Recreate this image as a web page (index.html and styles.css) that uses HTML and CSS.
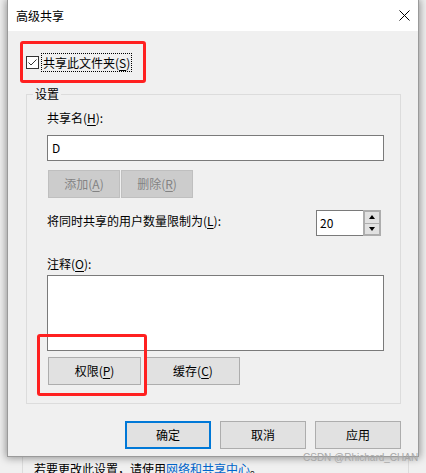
FILE: index.html
```html
<!DOCTYPE html>
<html lang="zh-CN">
<head>
<meta charset="utf-8">
<title>高级共享</title>
<link rel="stylesheet" href="styles.css">
</head>
<body>
<div class="desktop">
  <div class="dialog">
    <div class="titlebar">
      <span class="title">高级共享</span>
      <svg class="close" width="11" height="11" viewBox="0 0 11 11"><path d="M0.5 0.5 L10.5 10.5 M10.5 0.5 L0.5 10.5" stroke="#000" stroke-width="1" fill="none"/></svg>
    </div>
    <div class="body">
      <div class="share-row">
        <svg class="checkbox" width="13" height="13" viewBox="0 0 13 13"><rect x="0.5" y="0.5" width="12" height="12" fill="#fff" stroke="#333"/><path d="M2.5 6.5 L5 9 L10.5 3.5" stroke="#333" stroke-width="1" fill="none"/></svg>
        <span class="focus-label">共享此文件夹(<u>S</u>)</span>
      </div>
      <fieldset class="group">
        <legend>设置</legend>
        <div class="field-label">共享名(<u>H</u>):</div>
        <div class="text-input">D</div>
        <div class="btn-row">
          <div class="btn disabled">添加(<u>A</u>)</div>
          <div class="btn disabled">删除(<u>R</u>)</div>
        </div>
        <div class="limit-row">
          <div class="limit-label">将同时共享的用户数量限制为(<u>L</u>):</div>
          <div class="spin">
            <div class="spin-input">20</div>
            <div class="spin-btns">
              <div class="spin-btn"><span class="arrow-up"></span></div>
              <div class="spin-btn"><span class="arrow-down"></span></div>
            </div>
          </div>
        </div>
        <div class="comment-label">注释(<u>O</u>):</div>
        <div class="textarea"></div>
        <div class="btn-row2">
          <div class="btn perm">权限(<u>P</u>)</div>
          <div class="btn cache">缓存(<u>C</u>)</div>
        </div>
      </fieldset>
      <div class="footer">
        <div class="btn action default">确定</div>
        <div class="btn action">取消</div>
        <div class="btn action">应用</div>
      </div>
    </div>
  </div>
  <div class="parent-area">若要更改此设置，请使用<span class="link">网络和共享中心</span>。</div>
  <div class="mark mark1"></div>
  <div class="mark mark2"></div>
  <div class="watermark">CSDN @Rhichard_CHAN</div>
</div>
</body>
</html>
```
FILE: styles.css
```css
* { box-sizing: border-box; }
body {
  margin: 0;
  font: 12px/16px "Noto Sans CJK SC", "Noto Sans", sans-serif;
  color: #000;
}
u { text-decoration-thickness: 1px; text-underline-offset: 2px; }
.desktop {
  position: relative;
  width: 426px;
  height: 473px;
  overflow: hidden;
  background: #f0f0f0;
}
.dialog {
  position: relative;
  z-index: 1;
  margin-left: 7px;
  width: 412px;
  border: 1px solid #9a9a9a;
  border-top: none;
  background: #f0f0f0;
  box-shadow: 0 0 8px 1px rgba(0, 0, 0, 0.4);
}
.titlebar {
  height: 31px;
  background: #fff;
  display: flex;
  align-items: center;
  justify-content: space-between;
  padding: 0 8px 0 8px;
}
.close { display: block; }
.body { padding: 21px 17px 7px 18px; }
.share-row {
  display: flex;
  align-items: center;
  height: 20px;
}
.checkbox { display: block; }
.focus-label {
  margin-left: 2px;
  border: 1px dotted #000;
  padding: 0 1px;
  line-height: 17px;
}
.group {
  margin: 14px 0 0;
  width: 375px;
  border: 1px solid #dcdcdc;
  padding: 8px 16px 18px 20px;
  min-width: 0;
}
.group legend {
  padding: 0 2px;
  margin-left: -14px;
  line-height: 16px;
}
.field-label { height: 16px; }
.text-input {
  margin-top: 9px;
  height: 26px;
  border: 1px solid #7a7a7a;
  background: #fff;
  padding-left: 4px;
  display: flex;
  align-items: center;
}
.btn-row {
  margin-top: 9px;
  display: flex;
  gap: 1px;
  padding-left: 1px;
}
.btn {
  height: 28px;
  display: flex;
  align-items: center;
  justify-content: center;
  border: 1px solid #adadad;
  background: #e1e1e1;
}
.btn.disabled {
  width: 72px;
  background: #cccccc;
  border-color: #bfbfbf;
  color: #838383;
}
.limit-row {
  margin-top: 12px;
  display: flex;
  justify-content: space-between;
  align-items: flex-start;
}
.limit-label { margin-top: 3px; }
.spin {
  display: flex;
  width: 65px;
  height: 26px;
  margin-right: 3px;
}
.spin-input {
  flex: 1;
  border: 1px solid #7a7a7a;
  border-right: none;
  background: #fff;
  padding-left: 3px;
  display: flex;
  align-items: center;
}
.spin-btns {
  width: 18px;
  display: flex;
  flex-direction: column;
  border: 1px solid #adadad;
  background: #f0f0f0;
}
.spin-btn {
  flex: 1;
  display: flex;
  align-items: center;
  justify-content: center;
  background: #e1e1e1;
  border: 1px solid #adadad;
}
.spin-btn + .spin-btn { border-top: none; }
.arrow-up {
  width: 0; height: 0;
  border-left: 3.5px solid transparent;
  border-right: 3.5px solid transparent;
  border-bottom: 4px solid #000;
}
.arrow-down {
  width: 0; height: 0;
  border-left: 3.5px solid transparent;
  border-right: 3.5px solid transparent;
  border-top: 4px solid #000;
}
.comment-label { margin-top: 20px; height: 16px; }
.textarea {
  margin-top: 3px;
  height: 76px;
  border: 1px solid #7a7a7a;
  background: #fff;
}
.btn-row2 {
  margin-top: 6px;
  display: flex;
  gap: 5px;
  padding-left: 1px;
}
.btn.perm { width: 93px; }
.btn.cache { width: 94px; }
.footer {
  margin-top: 17px;
  display: flex;
  justify-content: flex-end;
  gap: 9px;
}
.btn.action { width: 86px; }
.btn.default { border: 2px solid #0078d7; }
.parent-area {
  margin-left: 22px;
  width: 387px;
  height: 20px;
  border-left: 1px solid #dcdcdc;
  border-right: 1px solid #dcdcdc;
  padding: 4px 0 0 11px;
  background: #f0f0f0;
  white-space: nowrap;
}
.link { color: #0066cc; }
.mark {
  position: absolute;
  z-index: 2;
  border: 3px solid #ff2020;
  border-radius: 3px;
}
.mark1 { left: 20px; top: 41px; width: 126px; height: 42px; }
.mark2 { left: 37px; top: 334px; width: 110px; height: 62px; }
.watermark {
  position: absolute;
  z-index: 3;
  left: 303px;
  top: 452px;
  font: 10px/12px "Liberation Sans", sans-serif;
  color: #a8a8a8;
  white-space: nowrap;
}
```
